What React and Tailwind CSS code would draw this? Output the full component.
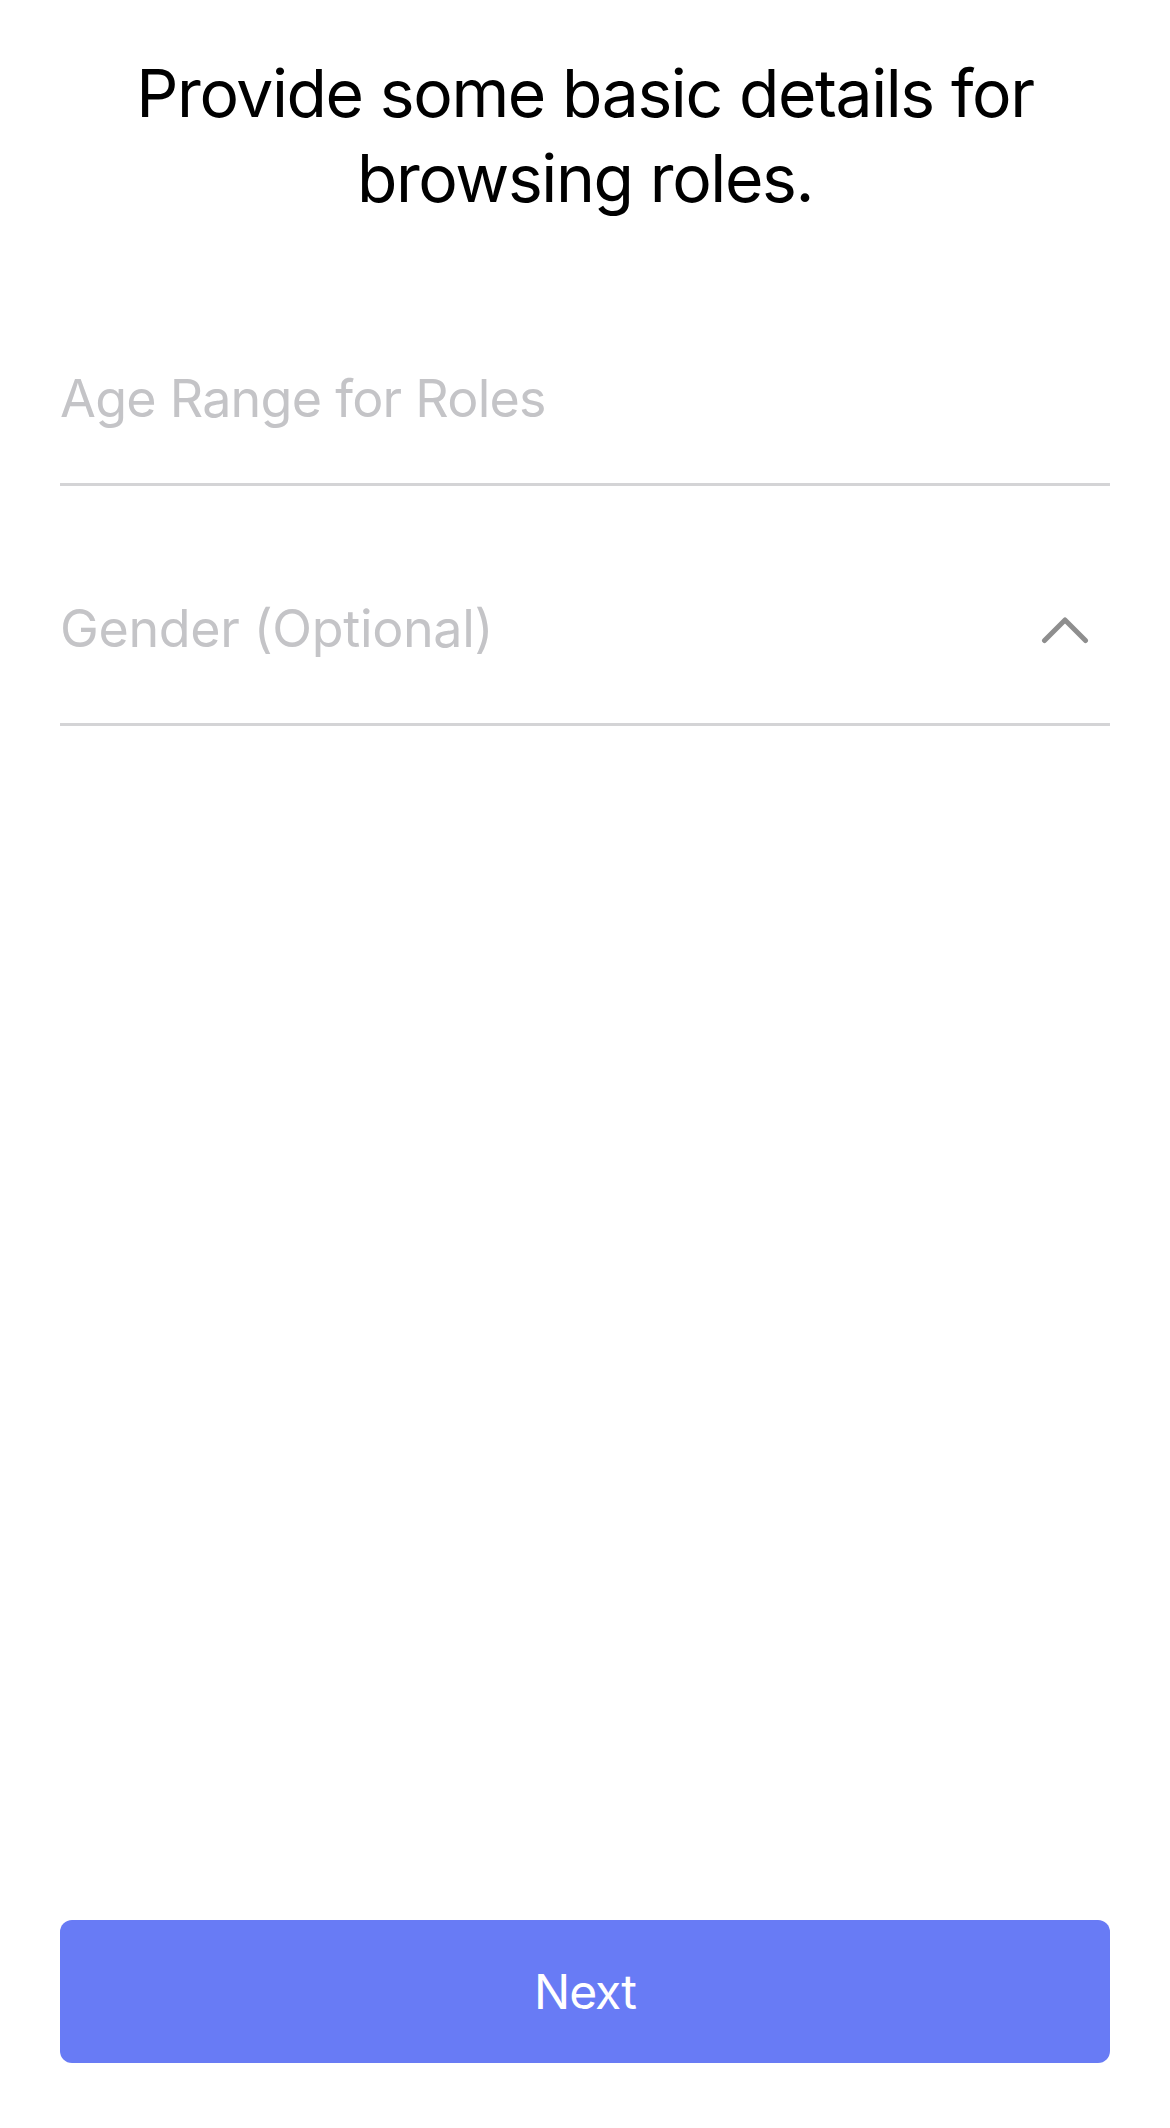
import React from 'react';

function ChevronUp() {
  return (
    <svg width="48" height="30" viewBox="0 0 48 30" fill="none" className="shrink-0">
      <path d="M3.5 26.5 L24 6 L44.5 26.5" stroke="#8e8e8e" strokeWidth="5" strokeLinecap="round" strokeLinejoin="round" />
    </svg>
  );
}

export default function App() {
  return (
    <div
      className="min-h-screen bg-white flex flex-col px-[60px]"
      style={{ fontFamily: 'Inter, "Liberation Sans", sans-serif' }}
    >
      {/* Heading */}
      <h1 className="pt-[51px] text-center text-[66px] leading-[85px] text-black font-normal tracking-[-1.4px]">
        Provide some basic details for
        <br />
        browsing roles.
      </h1>

      {/* Age range field */}
      <div className="mt-[147px] pb-[53px] border-b-[3px] border-[#d4d4d6]">
        <span className="block text-[52px] leading-[62px] text-[#c4c4c7] tracking-[-0.75px]">
          Age Range for Roles
        </span>
      </div>

      {/* Gender field */}
      <div className="mt-[112px] pb-[63px] border-b-[3px] border-[#d4d4d6] flex items-center justify-between">
        <span className="block text-[52px] leading-[62px] text-[#c4c4c7] tracking-[-0.35px]">
          Gender (Optional)
        </span>
        <div className="mr-[21px]">
          <ChevronUp />
        </div>
      </div>

      <button className="mt-auto mb-[65px] h-[143px] w-full rounded-[12px] bg-[#687bf5] text-white text-[48px] tracking-[-1px]">
        Next
      </button>
    </div>
  );
}
